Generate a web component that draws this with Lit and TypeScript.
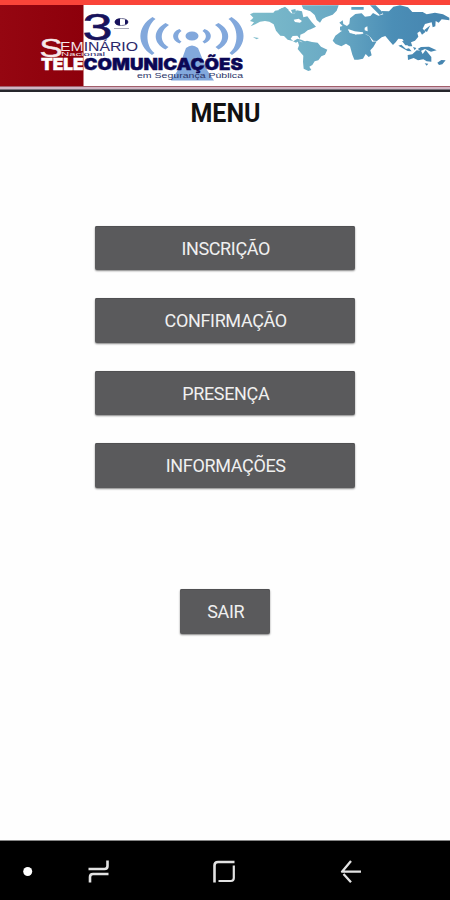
import { LitElement, html, css } from "lit";
import { customElement, property } from "lit/decorators.js";

@customElement("event-banner")
class EventBanner extends LitElement {
  static styles = css`
    :host { display: block; height: 87px; }
    svg { display: block; }
    .sans { font-family: "Liberation Sans", Arial, sans-serif; }
    .heavy { font-family: Inter, "DejaVu Sans", sans-serif; font-weight: 900; }
    .navy { fill: #17125c; }
    .split { fill: url(#ink); }
    .tower { fill: #82a8dc; }
  `;

  render() {
    return html`
      <svg width="450" height="87" viewBox="0 5 450 87" aria-label="3º Seminário Nacional">
        <defs>
          <linearGradient id="ink" gradientUnits="userSpaceOnUse" x1="83" y1="0" x2="84" y2="0">
            <stop offset="0" stop-color="#f7e9ea" />
            <stop offset="1" stop-color="#2a2668" />
          </linearGradient>
          <linearGradient id="sea" gradientUnits="userSpaceOnUse" x1="30" y1="0" x2="600" y2="0">
            <stop offset="0" stop-color="#7dbccb" />
            <stop offset=".45" stop-color="#69a9c4" />
            <stop offset=".75" stop-color="#4b8eb6" />
            <stop offset="1" stop-color="#4685b0" />
          </linearGradient>
          <linearGradient id="maroon" x1="0" y1="0" x2="1" y2="0">
            <stop offset="0" stop-color="#950611" />
            <stop offset="1" stop-color="#8d000b" />
          </linearGradient>
        </defs>
        <rect y="5" width="450" height="87" fill="#fff" />
        <rect y="5" width="83.500" height="81" fill="url(#maroon)" />

        <g class="tower">
          <path d="M155.500 19C145 27 145 46 154.500 53L152 55C136.500 45 136.500 27 152.500 17Z" />
          <path d="M169 25C159.500 31 159.500 42 168.500 47L165.500 49.500C152.500 43 152.500 30 165.500 23Z" />
          <path d="M181.500 31C177 34 177 39 181.500 41.500L179.500 43.500C171 40 171 32 179.500 29Z" />
          <path d="M228.500 19C239 27 239 46 229.500 53L232 55C247.500 45 247.500 27 231.500 17Z" />
          <path d="M215 25C224.500 31 224.500 42 215.500 47L218.500 49.500C231.500 43 231.500 30 218.500 23Z" />
          <path d="M202.500 31C207 34 207 39 202.500 41.500L204.500 43.500C213 40 213 32 204.500 29Z" />
        </g>
        <ellipse class="tower" cx="192" cy="36" rx="6.500" ry="4.500" />
        <path class="tower" d="M186 48Q192 43 198 48L207 70L214 80.500H171L178 70Z" />

        <text class="sans navy" x="82.500" y="39.500" font-size="36" stroke="#17125c" stroke-width=".6" textLength="30" lengthAdjust="spacingAndGlyphs">3</text>
        <ellipse cx="121.500" cy="22" rx="6.500" ry="3.500" fill="none" stroke="#77779a" stroke-width="1" />
        <path d="M120 18.500C113 18.500 113 25.500 120 25.500ZM125 19.500C129 19.500 129 24.500 125 24.500Z" fill="#17125c" />
        <path d="M114 28.500H129" stroke="#aaaab8" stroke-width="1" />

        <text class="sans split" x="39.500" y="56.500" font-size="26" stroke="url(#ink)" stroke-width=".5" textLength="23" lengthAdjust="spacingAndGlyphs">S</text>
        <text class="sans split" x="60" y="50.500" font-size="12" textLength="78" lengthAdjust="spacingAndGlyphs">EMINÁRIO</text>
        <text class="sans split" x="61" y="55.800" font-size="6" textLength="44" lengthAdjust="spacingAndGlyphs">Nacional</text>
        <text class="heavy" x="41" y="70" font-size="16" fill="#fff" stroke="#fff" stroke-width=".4" textLength="42.500" lengthAdjust="spacingAndGlyphs">TELE</text>
        <text class="heavy" x="83.500" y="70" font-size="16" fill="#0b0755" stroke="#0b0755" stroke-width=".4" textLength="159.500" lengthAdjust="spacingAndGlyphs">COMUNICAÇÕES</text>
        <text class="sans" x="137" y="77.500" font-size="7.500" fill="#2c3568" textLength="106" lengthAdjust="spacingAndGlyphs">em Segurança Pública</text>

        <g transform="translate(240 0) scale(.33333)" fill="url(#sea)">
          <path d="M30 43L40 38H100L105 32L118 30L126 24L142 27L154 40L165 40L170 31L186 34L190 52L202 49L215 66L228 80L212 88L203 91L193 99L181 104L180 117L172 107L158 108L152 116L160 124L172 116L184 119L198 125L189 127L178 122L168 128L156 122L143 119L132 108L121 107L108 92L101 73L88 65L75 63L60 65L46 73L32 79L42 67L30 63L40 53Z" />
          <path d="M172 121L186 127L201 122L216 126L233 128L243 140L262 149L255 164L244 169L235 181L224 184L217 195L208 200L214 210L205 213L191 206L189 185L190 167L181 157L173 147L177 136Z" />
          <path d="M185 16H296L290 32L278 44L257 52L247 57L240 68L230 60L224 45L211 34L190 27Z" />
          <path d="M115 29L135 20L146 29L135 35ZM153 30L166 27L169 38L157 39ZM39 111L57 114L50 118ZM334 21H371V29H334ZM390 16H407L430 39L419 45L404 30Z" />
          <path d="M298 68L308 61L310 72L321 78L328 71L330 55L346 42L365 40L375 50L391 48L399 39L415 47L430 43L425 33L447 34L460 20L480 16L504 22L517 36H548L560 43L585 38L609 43L628 53V61L605 58L596 68L587 63L586 79L578 82L575 67L555 72L548 86L557 95L546 104L540 94L532 99L535 110L525 122L513 127L517 139L506 139L493 126L487 117L475 116L467 127L459 135L449 124L436 108L425 112L411 123L400 122L390 110L382 104L365 101L350 104L342 93L326 88L314 95L300 91L300 80L308 78Z" />
          <path d="M286 107L304 94L322 88L330 97L348 104L374 101L388 109L397 125L410 124L400 141L391 151L395 166L386 171L377 162L369 176L354 179L343 179L337 164L330 139L318 131L304 139L287 132L278 122Z" />
          <path d="M503 165L517 163L530 151L543 152L548 162L557 150L574 171L574 185L560 184L550 178L534 181L521 174L504 180ZM554 190L565 191L560 197ZM592 188L604 180L617 181L607 193L597 195ZM475 137L484 134L498 147L507 145L515 154L503 153L487 144ZM486 123L502 124L510 136L496 136ZM519 141L529 144L524 151ZM533 147L543 141L567 140L590 151L573 155L555 147L542 153ZM552 91L571 76L561 96Z" />
          <path fill="#fff" d="M161 59L176 56L186 63L180 68L165 66ZM327 93L343 94L369 97L370 101L348 103L329 99ZM374 83L382 79L383 94L374 91Z" />
        </g>

        <path d="M0 86.500H450" stroke="#a25e6b" stroke-width="1" />
        <path d="M0 88H450" stroke="#d0b5c4" stroke-width="2" />
        <path d="M0 89.500H450" stroke="#77727c" stroke-width="1" />
        <path d="M0 91H450" stroke="#25262b" stroke-width="2" />
      </svg>`;
  }
}

@customElement("menu-button")
class MenuButton extends LitElement {
  @property() label = "";
  static styles = css`
    :host { display: block; height: 44.500px; }
    button {
      display: flex; align-items: center; justify-content: center;
      width: 100%; height: 100%; padding: 2px 0 0 1.500px; border: 0; border-radius: 2px;
      background: #5a5a5c; color: #f0f0f0;
      box-shadow: 0 1px 2px rgba(0, 0, 0, .48), inset 0 1px #505052;
      font: 400 18px/22px Roboto, sans-serif;
      letter-spacing: -.35px;
    }
  `;
  render() {
    return html`<button>${this.label}</button>`;
  }
}

@customElement("app-root")
class AppRoot extends LitElement {
  static styles = css`
    :host {
      display: flex; flex-direction: column; width: 450px; height: 900px;
      background: #fefefe; font-family: Roboto, sans-serif; overflow: hidden;
    }
    .status { height: 5px; background: #fa4439; flex: none; }
    event-banner { flex: none; }
    main { flex: 1; display: flex; flex-direction: column; align-items: center; }
    h1 { margin: 6px 0 0; padding-left: 1px; font-size: 25px; line-height: 32px; font-weight: 700; color: #111; }
    .menu { display: flex; flex-direction: column; gap: 28px; width: 260px; margin-top: 95.500px; }
    .exit { width: 90px; margin-top: 101.500px; }
    nav { height: 60px; flex: none; background: #000; border-top: 1px solid #858585; box-sizing: border-box; }
    nav svg { display: block; }
  `;

  render() {
    return html`
      <div class="status"></div>
      <event-banner></event-banner>
      <main>
        <h1>MENU</h1>
        <div class="menu">
          ${["INSCRIÇÃO", "CONFIRMAÇÃO", "PRESENÇA", "INFORMAÇÕES"].map(
            (label) => html`<menu-button label=${label}></menu-button>`
          )}
        </div>
        <menu-button class="exit" label="SAIR"></menu-button>
      </main>
      <nav>
        <svg width="450" height="59" viewBox="0 841 450 59" fill="none" stroke="#e2e2e2" stroke-width="2">
          <circle cx="27.700" cy="871.500" r="4.500" fill="#fff" stroke="none" />
          <path d="M88.500 869H104.500Q107.500 869 107.500 866V860.500M108.500 874H93Q90 874 90 877V882.500" stroke-width="2.600" />
          <path d="M234.500 862H218Q214.500 862 214.500 865.500V882.500" stroke-width="2.600" />
          <path d="M233.800 865.500V878Q233.800 881 230.800 881H218.500" stroke-width="2.200" />
          <path d="M361 871.700H342L351 861M343.500 874L351 882.300" stroke-width="2.300" stroke-linejoin="round" />
        </svg>
      </nav>
    `;
  }
}
